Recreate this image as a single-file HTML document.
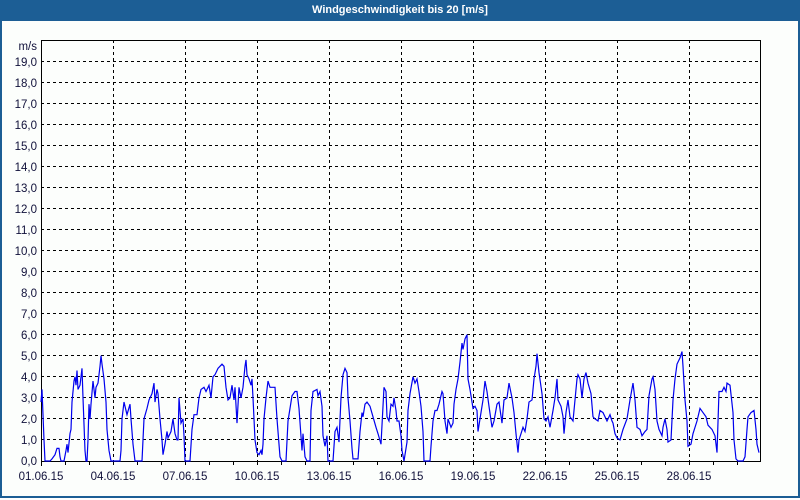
<!DOCTYPE html>
<html><head><meta charset="utf-8"><style>
html,body{margin:0;padding:0;background:#fff;}
body{width:800px;height:500px;position:relative;overflow:hidden;font-family:"Liberation Sans",sans-serif;}
#hdr{position:absolute;left:0;top:0;width:800px;height:21px;background:#1c5e95;color:#fff;font-weight:bold;font-size:11px;text-align:center;line-height:21px;}
#frame{position:absolute;left:0;top:21px;width:796px;height:475px;border:2px solid #1c5e95;border-top:none;background:#fcfefc;}
svg{position:absolute;left:0;top:0;}
text{font-family:"Liberation Sans",sans-serif;font-size:11.5px;fill:#10103a;}
</style></head><body>
<div id="frame"></div>
<div id="hdr">Windgeschwindigkeit bis 20 [m/s]</div>
<svg width="800" height="500" viewBox="0 0 800 500">
<g stroke="#000" stroke-width="1" stroke-dasharray="3,3" shape-rendering="crispEdges">
<path d="M41 61.5H760M41 82.5H760M41 103.5H760M41 124.5H760M41 145.5H760M41 166.5H760M41 187.5H760M41 208.5H760M41 229.5H760M41 250.5H760M41 271.5H760M41 292.5H760M41 313.5H760M41 334.5H760M41 355.5H760M41 376.5H760M41 397.5H760M41 418.5H760M41 439.5H760"/>
<path d="M113.5 40V461M185.5 40V461M257.5 40V461M329.5 40V461M401.5 40V461M473.5 40V461M545.5 40V461M617.5 40V461M689.5 40V461"/>
</g>
<g stroke="#000" fill="none" shape-rendering="crispEdges">
<rect x="41.5" y="40.5" width="719" height="421" stroke-width="1"/>
<path d="M41.5 40V466M65.5 461V465M89.5 461V465M113.5 461V465M137.5 461V465M161.5 461V465M185.5 461V465M209.5 461V465M233.5 461V465M257.5 461V465M281.5 461V465M305.5 461V465M329.5 461V465M353.5 461V465M377.5 461V465M401.5 461V465M425.5 461V465M449.5 461V465M473.5 461V465M497.5 461V465M521.5 461V465M545.5 461V465M569.5 461V465M593.5 461V465M617.5 461V465M641.5 461V465M665.5 461V465M689.5 461V465M713.5 461V465M737.5 461V465"/>
</g>
<g transform="translate(0,461) scale(1,-21.05)">
<polyline fill="none" stroke="#0000ee" stroke-width="1.2" vector-effect="non-scaling-stroke" points="
41,2.8 42,3.4 44,1.0 45,0 50,0 52,0.1 55,0.3 57,0.6 59,0.6 60,0.2 61,0 64,0 66,0.5 67,0.8 68,0.4 70,1.3 71,1.5 72,2.8 74,3.8 75,4.0 76,3.6 77,4.3 78,3.4 80,3.6 82,4.4 83,3.0 85,0.5 86,0 87,0 88,1.0 89,2.7 90,2.0 91,2.7 93,3.8 95,3.0 96,3.5 98,3.7 100,4.5 101,5.0 102,4.6 104,3.9 106,2.8 107,1.5 109,0.5 111,0 120,0 121,0.5 122,2.0 124,2.8 127,2.2 130,2.7 131,2.0 133,0.8 135,0 142,0 144,2.0 147,2.5 149,2.9 152,3.2 154,3.7 155,2.8 157,3.4 158,3.2 160,2.0 162,1.0 163,0.3 165,0.8 167,1.4 168,1.1 171,1.4 173,2.0 175,1.3 177,1.0 178,1.0 179,3.0 181,1.8 183,2.0 184,1.2 185,0 190,0 192,1.5 194,2.2 197,2.2 199,3.0 201,3.4 204,3.5 206,3.3 208,3.5 209,3.6 211,3.0 213,4.0 215,4.1 218,4.4 222,4.6 224,4.5 226,3.5 228,2.9 230,3.0 232,3.6 234,2.9 235,3.5 237,1.8 239,3.5 241,3.0 243,3.5 245,4.5 246,4.8 247,4.1 249,3.9 251,3.6 252,3.9 253,3.0 254,2.0 255,1.0 257,0.4 259,0.3 261,0.5 262,0.3 263,0.8 264,2.0 266,3.0 268,3.8 270,3.5 275,3.5 277,2.0 280,0.2 282,0 286,0 288,1.9 292,3.1 295,3.3 297,3.3 299,2.5 302,0.5 303,1.3 305,0.2 307,0 310,0 311,2.4 313,3.3 317,3.4 318,3.1 320,3.3 322,2.6 323,1.2 325,0.7 327,1.2 328,0 333,0 335,1.4 337,1.6 339,0.9 341,3.0 343,4.1 345,4.4 347,4.2 348,3.0 350,1.9 352,0.6 353,0.1 358,0.1 360,1.4 362,2.3 363,2.1 365,2.7 367,2.8 370,2.6 373,2.1 376,1.6 378,1.3 381,0.8 383,2.6 384,3.5 386,3.3 387,2.1 389,1.9 391,2.7 393,2.6 394,3.0 396,2.4 397,1.9 399,1.9 401,1.2 402,0.5 404,0 407,0.9 408,2.4 410,3.2 413,4.0 415,3.7 417,3.9 419,3.3 421,2.6 423,1.4 424,0 430,0 431,0.7 433,1.9 435,2.4 437,2.4 439,2.7 442,3.3 443,3.2 445,1.9 447,1.3 448,2.0 451,1.6 453,1.8 454,2.7 456,3.4 458,3.9 460,4.7 462,5.6 463,5.3 465,5.8 467,6.0 468,3.9 470,3.4 472,2.8 473,2.5 475,2.6 477,2.4 478,1.4 480,2.0 483,2.9 485,3.8 487,3.3 489,2.6 492,1.6 494,1.9 497,2.7 499,2.8 502,1.8 504,2.9 507,3.0 509,3.7 512,3.0 514,2.3 516,1.3 518,0.4 519,1.0 521,1.3 523,1.6 525,1.4 527,2.0 529,2.8 532,2.9 534,3.9 536,4.5 537,5.1 539,4.2 542,3.2 544,2.0 546,1.9 548,2.1 550,1.6 553,2.4 555,3.0 557,3.9 558,2.9 561,2.6 563,2.1 564,1.3 566,2.3 568,2.9 570,2.1 573,1.9 575,2.9 577,3.9 578,4.1 580,3.9 582,3.0 584,3.9 586,4.2 588,3.7 591,3.2 593,2.1 595,2.0 598,1.9 600,2.4 603,2.3 607,1.9 610,2.2 612,1.9 613,1.8 615,1.3 617,1.1 620,1.0 623,1.5 627,2.0 630,2.9 633,3.7 635,2.9 637,1.6 640,1.5 642,1.2 645,1.4 647,1.5 649,3.1 652,3.9 653,4.0 655,3.4 657,1.9 659,1.5 662,1.2 663,1.6 665,2.0 667,1.5 668,0.9 671,1.0 673,2.9 675,3.9 677,4.6 680,4.9 682,5.2 683,4.5 685,2.9 687,1.9 688,0.7 691,0.8 693,1.3 697,1.9 700,2.5 703,2.3 706,2.1 708,1.7 712,1.5 715,1.2 717,0.4 719,3.3 722,3.3 724,3.5 726,3.3 727,3.7 730,3.6 733,2.3 734,1.0 736,0.1 738,0 743,0 745,0.2 747,1.5 748,2.1 751,2.3 754,2.4 756,1.5 757,0.8 759,0.4"/>
</g>
<g text-anchor="end">
<text x="37" y="50">m/s</text>
<text x="37" y="66">19,0</text><text x="37" y="87">18,0</text><text x="37" y="108">17,0</text><text x="37" y="129">16,0</text><text x="37" y="150">15,0</text><text x="37" y="171">14,0</text><text x="37" y="192">13,0</text><text x="37" y="213">12,0</text><text x="37" y="234">11,0</text><text x="37" y="255">10,0</text><text x="37" y="276">9,0</text><text x="37" y="297">8,0</text><text x="37" y="318">7,0</text><text x="37" y="339">6,0</text><text x="37" y="360">5,0</text><text x="37" y="381">4,0</text><text x="37" y="402">3,0</text><text x="37" y="423">2,0</text><text x="37" y="444">1,0</text><text x="37" y="465">0,0</text>
</g>
<g text-anchor="middle">
<text x="41" y="480">01.06.15</text><text x="113" y="480">04.06.15</text><text x="185" y="480">07.06.15</text><text x="257" y="480">10.06.15</text><text x="329" y="480">13.06.15</text><text x="401" y="480">16.06.15</text><text x="473" y="480">19.06.15</text><text x="545" y="480">22.06.15</text><text x="617" y="480">25.06.15</text><text x="689" y="480">28.06.15</text>
</g>
</svg>
</body></html>
